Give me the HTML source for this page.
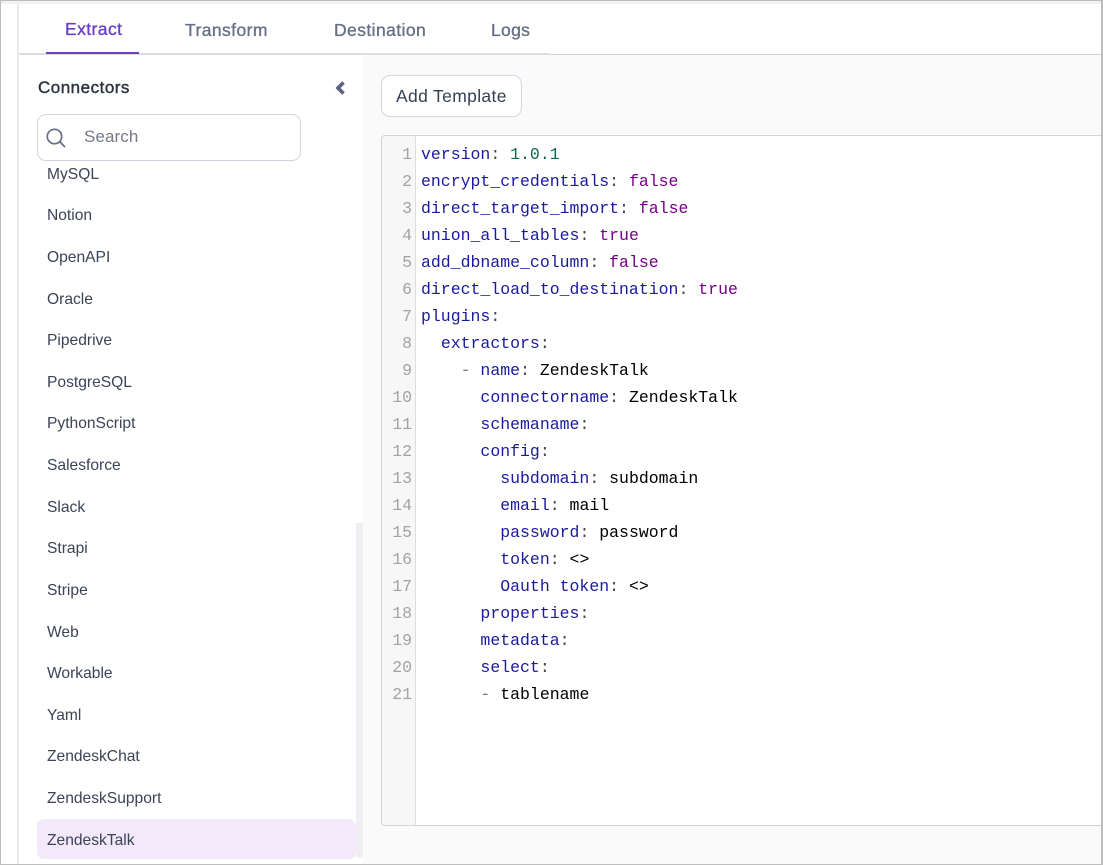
<!DOCTYPE html>
<html><head><meta charset="utf-8">
<style>
html,body{margin:0;padding:0}
body{width:1103px;height:865px;position:relative;overflow:hidden;background:#fff;font-family:"Liberation Sans",sans-serif}
.a{position:absolute}
.tab{position:absolute;top:19px;line-height:22px;font-size:17.5px;letter-spacing:.42px;font-weight:500;color:#667085;white-space:nowrap;-webkit-text-stroke:.35px currentColor}
.it{position:absolute;left:47px;font-size:15.6px;line-height:20px;color:#3d4256;white-space:nowrap}
.ln{position:absolute;left:382px;width:30px;text-align:right;font:16.5px/27px "Liberation Mono",monospace;color:#a3a3a3}
.cd{position:absolute;left:421px;font:16.5px/27px "Liberation Mono",monospace;color:#000;white-space:pre}
.k{color:#1a1a9c}.b{color:#770088}.n{color:#116644}.d{color:#777}.c{color:#444}
</style></head><body>
<div class="a" style="left:0;top:0;width:1103px;height:865px;box-sizing:border-box;border:1px solid #bdbdbd;border-width:1px 2px 1px 1px"></div>
<div class="a" style="left:1px;top:1px;width:1100px;height:3px;background:#f2f2f4"></div>
<div class="a" style="left:17px;top:4px;width:2px;height:860px;background:#e9e9ee"></div>
<div class="a" style="left:19px;top:54px;width:1082px;height:1px;background:#d2d2d2"></div>
<div class="a" style="left:19px;top:53px;width:530px;height:2px;background:#dcdde2"></div>
<div class="a" style="left:46px;top:52px;width:93px;height:2px;background:#6b3fc9"></div>
<div class="tab" style="left:65px;top:18px;color:#6b3fc9">Extract</div>
<div class="tab" style="left:185px">Transform</div>
<div class="tab" style="left:334px">Destination</div>
<div class="tab" style="left:491px;letter-spacing:.3px">Logs</div>

<div class="a" style="left:363px;top:55px;width:738px;height:809px;background:#fafafa"></div>

<div class="a" style="left:38px;top:77px;font-size:17px;letter-spacing:.5px;line-height:22px;font-weight:500;color:#2b3040;-webkit-text-stroke:.4px #2b3040;white-space:nowrap">Connectors</div>
<svg class="a" style="left:333px;top:81px" width="14" height="14" viewBox="0 0 14 14"><path d="M10.5 1.5 L5 7 L10.5 12.5" fill="none" stroke="#5a6280" stroke-width="3.6"/></svg>

<div class="a" style="left:19px;top:168px;width:337px;height:691px;overflow:hidden">
<div class="it" style="left:28px;top:-3px">MySQL</div>
</div>
<div class="a" style="left:37px;top:114px;width:264px;height:47px;box-sizing:border-box;border:1px solid #d2d5e0;border-radius:9px;background:#fff"></div>
<svg class="a" style="left:44px;top:126px" width="24" height="24" viewBox="0 0 24 24"><circle cx="10.5" cy="10.5" r="7.2" fill="none" stroke="#667085" stroke-width="1.7"/><path d="M15.8 15.8 L21 21" stroke="#667085" stroke-width="1.8" fill="none"/></svg>
<div class="a" style="left:84px;top:126px;font-size:17px;letter-spacing:.1px;line-height:22px;color:#777b86">Search</div>

<div class="it" style="top:204px;margin-top:2px">Notion</div>
<div class="it" style="top:246px;margin-top:2px">OpenAPI</div>
<div class="it" style="top:288px;margin-top:2px">Oracle</div>
<div class="it" style="top:329px;margin-top:2px">Pipedrive</div>
<div class="it" style="top:371px;margin-top:2px">PostgreSQL</div>
<div class="it" style="top:412px;margin-top:2px">PythonScript</div>
<div class="it" style="top:454px;margin-top:2px">Salesforce</div>
<div class="it" style="top:496px;margin-top:2px">Slack</div>
<div class="it" style="top:537px;margin-top:2px">Strapi</div>
<div class="it" style="top:579px;margin-top:2px">Stripe</div>
<div class="it" style="top:621px;margin-top:2px">Web</div>
<div class="it" style="top:662px;margin-top:2px">Workable</div>
<div class="it" style="top:704px;margin-top:2px">Yaml</div>
<div class="it" style="top:745px;margin-top:2px">ZendeskChat</div>
<div class="it" style="top:787px;margin-top:2px">ZendeskSupport</div>
<div class="a" style="left:37px;top:819px;width:319px;height:40px;background:#f3e9fb;border-radius:7px"></div>
<div class="it" style="top:829px;margin-top:2px">ZendeskTalk</div>
<div class="a" style="left:356px;top:523px;width:7px;height:335px;background:#eeeef3;border-radius:0 0 3px 3px"></div>

<div class="a" style="left:381px;top:75px;width:141px;height:42px;box-sizing:border-box;border:1px solid #d2d5e0;border-radius:9px;background:#fff"></div>
<div class="a" style="left:396px;top:84px;font-size:17.5px;letter-spacing:.34px;line-height:24px;color:#344054;white-space:nowrap">Add Template</div>

<div class="a" style="left:381px;top:135px;width:722px;height:691px;box-sizing:border-box;border:1px solid #ced4da;border-right:0;border-radius:4px 0 0 4px;background:#fff"></div>
<div class="a" style="left:382px;top:136px;width:33px;height:689px;background:#f7f7f7;border-right:1px solid #ddd;border-radius:4px 0 0 4px"></div>

<div class="ln" style="top:141px">1</div>
<div class="ln" style="top:168px">2</div>
<div class="ln" style="top:195px">3</div>
<div class="ln" style="top:222px">4</div>
<div class="ln" style="top:249px">5</div>
<div class="ln" style="top:276px">6</div>
<div class="ln" style="top:303px">7</div>
<div class="ln" style="top:330px">8</div>
<div class="ln" style="top:357px">9</div>
<div class="ln" style="top:384px">10</div>
<div class="ln" style="top:411px">11</div>
<div class="ln" style="top:438px">12</div>
<div class="ln" style="top:465px">13</div>
<div class="ln" style="top:492px">14</div>
<div class="ln" style="top:519px">15</div>
<div class="ln" style="top:546px">16</div>
<div class="ln" style="top:573px">17</div>
<div class="ln" style="top:600px">18</div>
<div class="ln" style="top:627px">19</div>
<div class="ln" style="top:654px">20</div>
<div class="ln" style="top:681px">21</div>

<div class="cd" style="top:141px"><span class="k">version</span><span class="c">:</span> <span class="n">1.0.1</span></div>
<div class="cd" style="top:168px"><span class="k">encrypt_credentials</span><span class="c">:</span> <span class="b">false</span></div>
<div class="cd" style="top:195px"><span class="k">direct_target_import</span><span class="c">:</span> <span class="b">false</span></div>
<div class="cd" style="top:222px"><span class="k">union_all_tables</span><span class="c">:</span> <span class="b">true</span></div>
<div class="cd" style="top:249px"><span class="k">add_dbname_column</span><span class="c">:</span> <span class="b">false</span></div>
<div class="cd" style="top:276px"><span class="k">direct_load_to_destination</span><span class="c">:</span> <span class="b">true</span></div>
<div class="cd" style="top:303px"><span class="k">plugins</span><span class="c">:</span></div>
<div class="cd" style="top:330px">  <span class="k">extractors</span><span class="c">:</span></div>
<div class="cd" style="top:357px">    <span class="d">-</span> <span class="k">name</span><span class="c">:</span> ZendeskTalk</div>
<div class="cd" style="top:384px">      <span class="k">connectorname</span><span class="c">:</span> ZendeskTalk</div>
<div class="cd" style="top:411px">      <span class="k">schemaname</span><span class="c">:</span></div>
<div class="cd" style="top:438px">      <span class="k">config</span><span class="c">:</span></div>
<div class="cd" style="top:465px">        <span class="k">subdomain</span><span class="c">:</span> subdomain</div>
<div class="cd" style="top:492px">        <span class="k">email</span><span class="c">:</span> mail</div>
<div class="cd" style="top:519px">        <span class="k">password</span><span class="c">:</span> password</div>
<div class="cd" style="top:546px">        <span class="k">token</span><span class="c">:</span> &lt;&gt;</div>
<div class="cd" style="top:573px">        <span class="k">Oauth token</span><span class="c">:</span> &lt;&gt;</div>
<div class="cd" style="top:600px">      <span class="k">properties</span><span class="c">:</span></div>
<div class="cd" style="top:627px">      <span class="k">metadata</span><span class="c">:</span></div>
<div class="cd" style="top:654px">      <span class="k">select</span><span class="c">:</span></div>
<div class="cd" style="top:681px">      <span class="d">-</span> tablename</div>

<div class="a" style="left:1101px;top:0;width:2px;height:865px;background:#bdbdbd"></div>
<div class="a" style="left:0;top:864px;width:1103px;height:1px;background:#bdbdbd"></div>
</body></html>
